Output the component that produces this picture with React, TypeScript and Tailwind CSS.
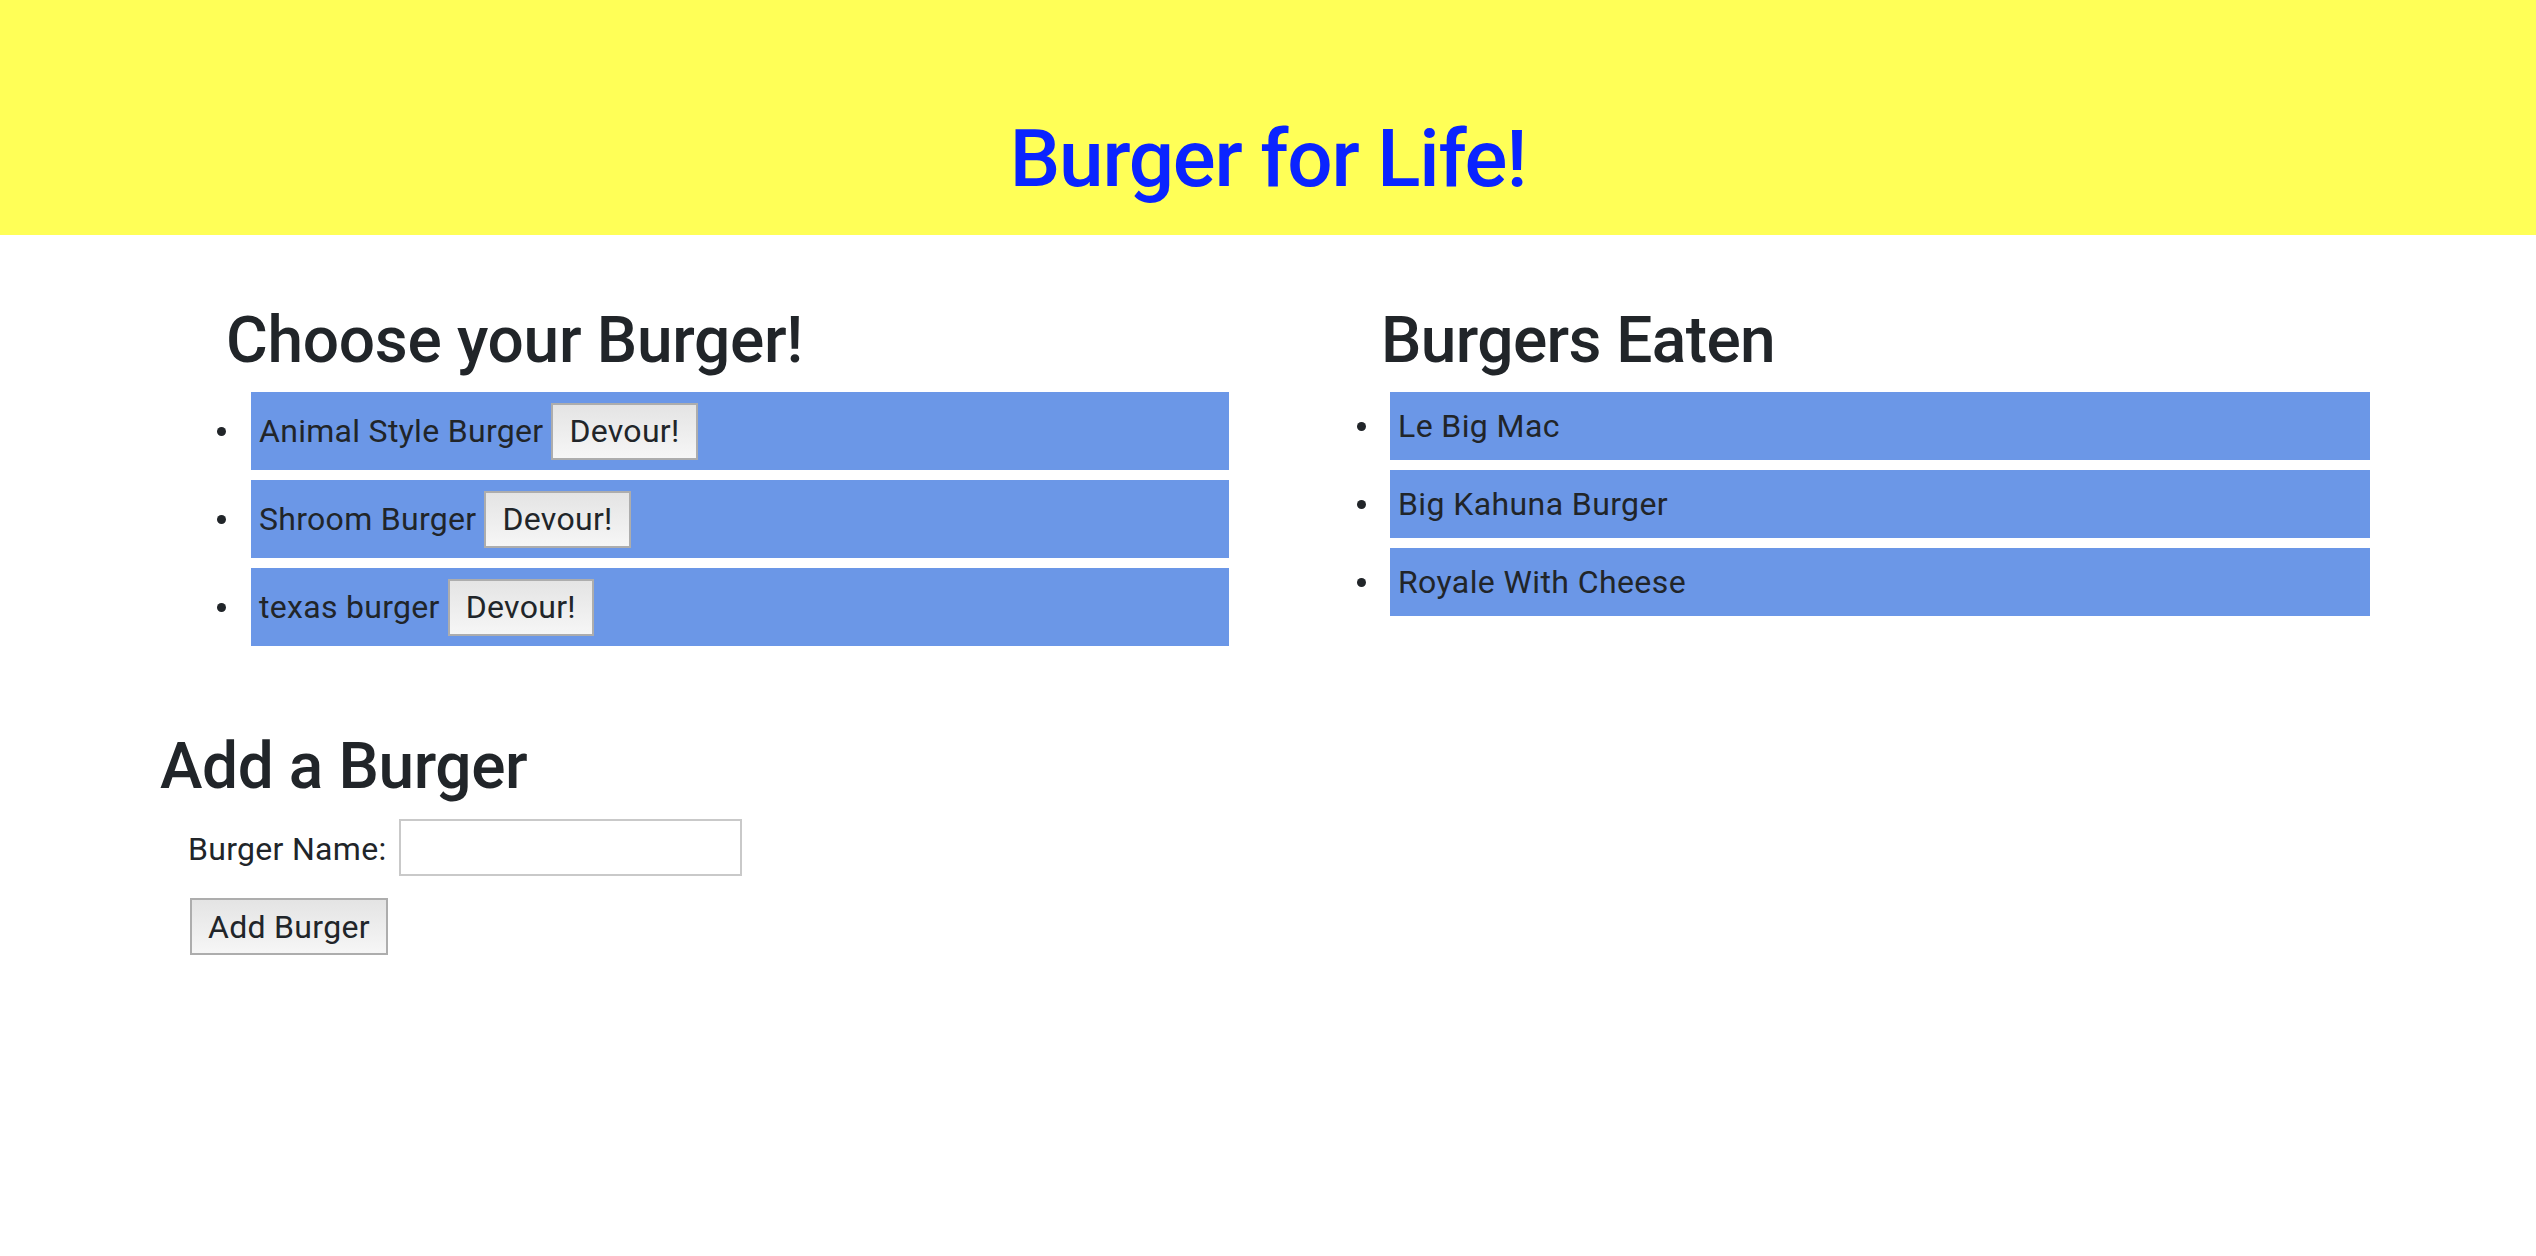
import { useState } from "react";

type Burger = {
  id: number;
  name: string;
};

const initialBurgers: Burger[] = [
  { id: 1, name: "Animal Style Burger" },
  { id: 2, name: "Shroom Burger" },
  { id: 3, name: "texas burger" },
];

const initialEaten: Burger[] = [
  { id: 4, name: "Le Big Mac" },
  { id: 5, name: "Big Kahuna Burger" },
  { id: 6, name: "Royale With Cheese" },
];

const btnClass =
  "h-[57px] px-4 border-2 border-[#adadad] bg-gradient-to-b from-[#e4e4e4] to-[#f6f6f6] text-[32px] leading-[48px] tracking-[0.3px] text-[#212529]";

export default function App() {
  const [burgers, setBurgers] = useState<Burger[]>(initialBurgers);
  const [eaten, setEaten] = useState<Burger[]>(initialEaten);
  const [name, setName] = useState("");

  const devour = (b: Burger) => {
    setBurgers((list) => list.filter((x) => x.id !== b.id));
    setEaten((list) => [...list, b]);
  };

  const addBurger = (e: React.FormEvent) => {
    e.preventDefault();
    if (!name.trim()) return;
    setBurgers((list) => [...list, { id: Date.now(), name: name.trim() }]);
    setName("");
  };

  return (
    <div className="min-h-screen bg-white text-[#212529] font-['Roboto',sans-serif]">
      {/* HEADER */}
      <header className="h-[235px] bg-[#ffff57] pt-[111px]">
        <h1 className="text-center text-[80px] leading-[96px] font-medium tracking-[-1.2px] text-[#0a24ff]">
          Burger for Life!
        </h1>
      </header>

      <div className="w-[2280px] mx-auto">
        <div className="grid grid-cols-2 mt-[67px]">
          {/* LEFT: NOT EATEN */}
          <div className="pl-[89px] pr-[39px]">
            <h2 className="pl-[9px] text-[64px] leading-[77px] font-medium tracking-[-0.3px] mb-[13px]">
              Choose your Burger!
            </h2>
            <ul className="flex flex-col gap-[10px]">
              {burgers.map((b) => (
                <li key={b.id} className="flex items-center">
                  <span className="w-[9px] h-[9px] rounded-full bg-[#212529] mr-[25px] shrink-0" />
                  <div className="flex-1 h-[78px] bg-[#6b97e7] pl-[8px] flex items-center gap-[8px]">
                    <span className="text-[32px] leading-[48px] tracking-[0.3px]">{b.name}</span>
                    <button className={btnClass} onClick={() => devour(b)}>
                      Devour!
                    </button>
                  </div>
                </li>
              ))}
            </ul>
          </div>

          {/* RIGHT: EATEN */}
          <div className="pl-[89px] pr-[38px]">
            <h2 className="pl-[24px] text-[64px] leading-[77px] font-medium tracking-[-0.6px] mb-[13px]">
              Burgers Eaten
            </h2>
            <ul className="flex flex-col gap-[10px]">
              {eaten.map((b) => (
                <li key={b.id} className="flex items-center">
                  <span className="w-[9px] h-[9px] rounded-full bg-[#212529] mr-[24px] shrink-0" />
                  <div className="flex-1 h-[68px] bg-[#6b97e7] pl-[8px] flex items-center">
                    <span className="text-[32px] leading-[48px] tracking-[0.4px]">{b.name}</span>
                  </div>
                </li>
              ))}
            </ul>
          </div>
        </div>

        {/* ADD FORM */}
        <div className="pl-[32px] mt-[82px]">
          <h2 className="text-[64px] leading-[77px] font-medium tracking-[-0.4px]">Add a Burger</h2>
          <form onSubmit={addBurger} className="pl-[28px] mt-[14px]">
            <div className="flex items-center gap-[13px]">
              <label className="text-[32px] leading-[48px] tracking-[0.3px] mt-[3px]">Burger Name:</label>
              <input
                type="text"
                value={name}
                onChange={(e) => setName(e.target.value)}
                className="w-[343px] h-[57px] border-2 border-[#c9c9c9] bg-white px-2 text-[32px] focus:outline-none"
              />
            </div>
            <button type="submit" className={`${btnClass} mt-[22px] ml-[2px]`}>
              Add Burger
            </button>
          </form>
        </div>
      </div>
    </div>
  );
}
